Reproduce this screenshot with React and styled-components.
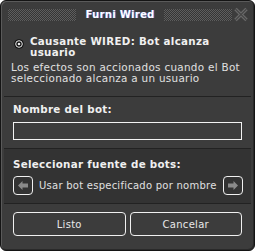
import React from 'react';
import styled, { createGlobalStyle } from 'styled-components';

const Global = createGlobalStyle`
  html, body { margin: 0; padding: 0; background: #ffffff; }
  body { font-family: "DejaVu Sans", Verdana, sans-serif; }
`;

const Window = styled.div`
  width: 255px;
  height: 251px;
  box-sizing: border-box;
  background: #3c3c3c;
  border: 1px solid #141414;
  border-radius: 6px;
  box-shadow: inset 1px 1px 0 #5a5a5a, inset -1px -1px 0 #2a2a2a;
  display: flex;
  flex-direction: column;
  overflow: hidden;
  color: #ececec;
`;

const Header = styled.div`
  height: 27px;
  box-sizing: border-box;
  display: flex;
  align-items: center;
  gap: 6px;
  padding: 0 5px 0 7px;
  flex-shrink: 0;
`;

const Dots = styled.div`
  flex: 1;
  height: 12px;
  background: repeating-conic-gradient(#5e5e5e 0 25%, #353535 0 50%) 0 0 / 2px 2px;
`;

const Title = styled.div`
  font-size: 10px;
  font-weight: bold;
  color: #ffffff;
  text-shadow: 1px 0 0 #5565c8;
  letter-spacing: 0.3px;
  white-space: nowrap;
  padding: 0 3px;
`;

const Close = styled.div`
  width: 17px;
  height: 17px;
  display: flex;
  align-items: center;
  justify-content: center;
  margin-left: -6px;
`;

const Section = styled.div`
  padding: ${p => p.$pad || '8px 9px'};
  background: ${p => p.$dark ? '#333333' : 'transparent'};
  border-bottom: ${p => p.$last ? 'none' : '1px solid #222222'};
  margin: 0 3px;
  display: flex;
  flex-direction: column;
  gap: ${p => p.$gap || '6px'};
  flex: ${p => p.$grow ? 1 : 'none'};
`;

const Row = styled.div`
  display: flex;
  align-items: ${p => p.$align || 'center'};
  gap: ${p => p.$gap || '6px'};
`;

const Heading = styled.div`
  font-size: 10.3px;
  font-weight: bold;
  line-height: 11px;
  letter-spacing: 0.3px;
  color: #f0f0f0;
`;

const Text = styled.div`
  font-size: 10.4px;
  line-height: 11px;
  letter-spacing: 0.3px;
  color: #e0e0e0;
`;

const Input = styled.div`
  height: 18px;
  border: 1px solid #f2f2f2;
  box-sizing: border-box;
`;

const ArrowBtn = styled.div`
  width: 20px;
  height: 19px;
  box-sizing: border-box;
  border: 1px solid #f0f0f0;
  border-radius: 4px;
  display: flex;
  align-items: center;
  justify-content: center;
  flex-shrink: 0;
`;

const Choice = styled.div`
  flex: 1;
  text-align: center;
  font-size: 10px;
  letter-spacing: 0.25px;
  color: #e0e0e0;
  white-space: nowrap;
`;

const Button = styled.div`
  flex: 1;
  height: 24px;
  box-sizing: border-box;
  border: 1px solid #f0f0f0;
  border-radius: 4px;
  display: flex;
  align-items: center;
  justify-content: center;
  font-size: 10px;
  letter-spacing: 0.3px;
  color: #e8e8e8;
`;

const Radio = () => (
  <svg width="10" height="10" viewBox="0 0 10 10" style={{ flexShrink: 0, marginTop: 3 }}>
    <circle cx="5" cy="5" r="4.8" fill="#111" />
    <circle cx="5" cy="5" r="3.3" fill="none" stroke="#eee" strokeWidth="1" />
    <circle cx="5" cy="5" r="1.3" fill="#eee" />
  </svg>
);

const Arrow = ({ dir }) => (
  <svg width="10" height="9" viewBox="0 0 10 9">
    {dir === 'left'
      ? <path d="M0 4.5 L4.5 0 L4.5 2.5 L10 2.5 L10 6.5 L4.5 6.5 L4.5 9 Z" fill="#8a8a8a" />
      : <path d="M10 4.5 L5.5 0 L5.5 2.5 L0 2.5 L0 6.5 L5.5 6.5 L5.5 9 Z" fill="#8a8a8a" />}
  </svg>
);

const CloseIcon = () => (
  <svg width="16" height="15" viewBox="0 0 16 15">
    <path d="M2.5 2 L13.5 13 M13.5 2 L2.5 13" stroke="#6c6c6c" strokeWidth="3.4" />
    <path d="M2.5 2 L13.5 13 M13.5 2 L2.5 13" stroke="#464646" strokeWidth="1.2" />
  </svg>
);

export default function App() {
  return (
    <>
      <Global />
      <Window>
        <Header>
          <Dots />
          <Title>Furni Wired</Title>
          <Dots />
          <Close><CloseIcon /></Close>
        </Header>
        <Section $pad="8px 7px 12px 7px" $gap="4px">
          <Row $align="flex-start" $gap="6px" style={{ paddingLeft: 3 }}>
            <Radio />
            <Heading>Causante WIRED: Bot alcanza usuario</Heading>
          </Row>
          <Text>Los efectos son accionados cuando el Bot seleccionado alcanza a un usuario</Text>
        </Section>
        <Section $pad="7px 9px 8px 9px" $gap="7px">
          <Heading>Nombre del bot:</Heading>
          <Input />
        </Section>
        <Section $dark $pad="10px 9px 8px 9px" $gap="6px">
          <Heading>Seleccionar fuente de bots:</Heading>
          <Row>
            <ArrowBtn><Arrow dir="left" /></ArrowBtn>
            <Choice>Usar bot especificado por nombre</Choice>
            <ArrowBtn><Arrow dir="right" /></ArrowBtn>
          </Row>
        </Section>
        <Section $last $grow $pad="8px 9px">
          <Row $gap="4px">
            <Button>Listo</Button>
            <Button>Cancelar</Button>
          </Row>
        </Section>
      </Window>
    </>
  );
}
